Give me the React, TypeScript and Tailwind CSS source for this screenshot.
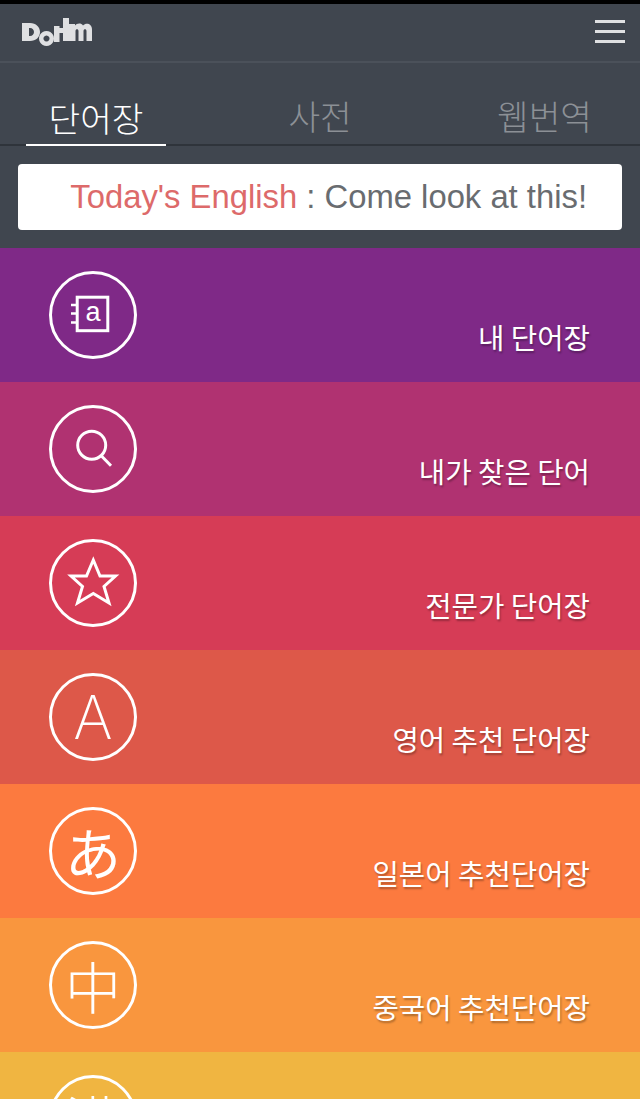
import React from 'react';

const KO = "font-['Noto_Sans_CJK_KR','Noto_Sans',sans-serif]";

function BookIcon() {
  return (
    <svg viewBox="0 0 88 88" className="w-[88px] h-[88px]" fill="none" stroke="white">
      <circle cx="44" cy="44" r="42.5" strokeWidth="3" />
      <rect x="28.200" y="26.200" width="30.600" height="33.500" strokeWidth="3" />
      <path d="M22 34h5M22 42.500h5M22 51.500h5" strokeWidth="2.500" />
      <text x="44" y="50" fill="white" stroke="none" textAnchor="middle" fontSize="27" fontFamily="Liberation Sans">a</text>
    </svg>
  );
}

function SearchIcon() {
  return (
    <svg viewBox="0 0 88 88" className="w-[88px] h-[88px]" fill="none" stroke="white">
      <circle cx="44" cy="44" r="42.5" strokeWidth="3" />
      <circle cx="42.700" cy="40.200" r="14" strokeWidth="3" />
      <path d="M52 50.500L62 60.700" strokeWidth="3" />
    </svg>
  );
}

function StarIcon() {
  return (
    <svg viewBox="0 0 88 88" className="w-[88px] h-[88px]" fill="none" stroke="white">
      <circle cx="44" cy="44" r="42.5" strokeWidth="3" />
      <path d="M44.300 21L51 37H66.500L55 47.500L60 64L44.300 54.500L28.500 64L33.500 47.500L22 37H37.500Z" strokeWidth="3" />
    </svg>
  );
}

function LetterIcon({ glyph, className }: { glyph: string; className: string }) {
  return (
    <div className={`w-[88px] h-[88px] rounded-full border-[3px] border-white flex items-center justify-center text-white leading-none ${className}`}>
      {glyph}
    </div>
  );
}

const CJK_ICON = "font-['Noto_Sans_CJK_JP',sans-serif]";

const rows = [
  { bg: 'bg-[#7f2987]', label: '내 단어장', icon: <BookIcon /> },
  { bg: 'bg-[#b03271]', label: '내가 찾은 단어', icon: <SearchIcon /> },
  { bg: 'bg-[#d63c56]', label: '전문가 단어장', icon: <StarIcon /> },
  { bg: 'bg-[#dd5849]', label: '영어 추천 단어장', icon: <LetterIcon glyph="A" className="font-['Inter',sans-serif] font-extralight text-[60px]" /> },
  { bg: 'bg-[#fc7a3f]', label: '일본어 추천단어장', icon: <LetterIcon glyph="あ" className={`${CJK_ICON} font-normal text-[56px]`} /> },
  { bg: 'bg-[#f9963e]', label: '중국어 추천단어장', icon: <LetterIcon glyph="中" className={`${CJK_ICON} font-light text-[56px]`} /> },
  { bg: 'bg-[#f0b541]', label: '', icon: <LetterIcon glyph="漢" className={`${CJK_ICON} font-light text-[56px]`} /> },
];

export default function App() {
  return (
    <div className={`w-[640px] h-[1099px] overflow-hidden bg-[#40464f] ${KO}`}>
      <div className="h-1 bg-black" />
      <header className="h-[59px] flex items-center justify-between pl-[22px] pr-[15px] pb-[2px] border-b-2 border-[#4b515a]">
        <svg viewBox="22 18 70 28" className="w-[70px] h-[28px]" fill="#dfe0e2">
          <path d="M22 23h8c6 0 10 4 10 9s-4 9-10 9h-8zM29 28v8h1c2.500 0 4-2 4-4s-1.500-4-4-4z" fillRule="evenodd" />
          <path d="M46.500 31a7.500 7.500 0 1 0 0.010 0zM46.500 35.500a3 3 0 1 1-0.010 0z" fillRule="evenodd" />
          <path d="M54 26h5.500v2H63V18h6v23h-6V33h-3.500v9H54z" />
          <path d="M69 24h6v1.500c1.500-2 6-3 8 0c3-3 9-2 9 4V41h-5.500V31c0-2.500-3-2.500-3 0V41h-5V31c0-2.500-3-2.500-3 0V41H69z" />
        </svg>
        <div className="flex flex-col gap-[7px]">
          <div className="w-[30px] h-[3px] bg-[#dfe0e2]" />
          <div className="w-[30px] h-[3px] bg-[#dfe0e2]" />
          <div className="w-[30px] h-[3px] bg-[#dfe0e2]" />
        </div>
      </header>
      <nav className="h-[83px] flex items-end pl-[26px] pr-[48px] border-b-2 border-[#2f343b] font-light text-[34.4px] leading-none text-[#8c9096]">
        <div className="w-[140px] -mb-[2px] pb-[10px] border-b-2 border-white text-white text-center">단어장</div>
        <div className="flex-1 pb-[12px] pr-[23px] text-center">사전</div>
        <div className="pb-[12px]">웹번역</div>
      </nav>
      <div className="h-[102px] px-[18px] pt-[18px]">
        <div className="h-[66px] bg-white rounded-[4px] flex items-center justify-end pr-[35px] text-[32.8px] font-['Liberation_Sans',sans-serif] text-[#696c70] whitespace-nowrap">
          <span className="text-[#dd6a6a]">Today's English</span>
          <span>&nbsp;: Come look at this!</span>
        </div>
      </div>
      {rows.map((row) => (
        <div key={row.bg} className={`h-[134px] flex ${row.bg} pl-[49px] pr-[50px] pt-[23px] justify-between`}>
          {row.icon}
          {row.label && (
            <div className="text-white text-[28.7px] leading-none pt-[52px] [text-shadow:1px_2px_2px_rgba(0,0,0,0.3)]">
              {row.label}
            </div>
          )}
        </div>
      ))}
    </div>
  );
}
